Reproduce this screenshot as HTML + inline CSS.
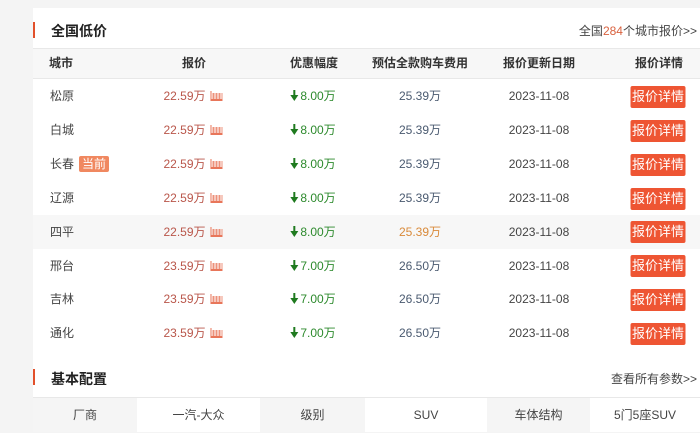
<!DOCTYPE html>
<html><head><meta charset="utf-8"><style>
*{margin:0;padding:0;box-sizing:border-box}
body{width:700px;height:432px;overflow:hidden;background:#f4f4f4;font-family:"Liberation Sans","Noto Sans CJK SC",sans-serif;font-size:12px;color:#444;position:relative}
.panel{position:absolute;left:33px;top:8px;right:0;bottom:0;background:#fff}
.t{position:absolute;font-size:14px;font-weight:bold;color:#222}
.bar{position:absolute;left:0;width:2px;height:16px;background:#e2502b}
.row{position:absolute;left:0;right:0;height:34px}
.c{position:absolute;top:0;line-height:34px;text-align:center;transform:translateX(-50%);white-space:nowrap}
.hd{background:#f7f7f7;border-top:1px solid #e8e8e8;border-bottom:1px solid #e8e8e8;font-weight:bold;color:#333}
.pr{color:#b9564a}
.ic{display:inline-block;width:12px;height:10px;border-bottom:2px solid #e8765a;border-left:1px solid #e8765a;vertical-align:-1px;margin-left:5px;position:relative}
.ic:after{content:"";position:absolute;left:1px;right:0;bottom:0;height:6px;background:repeating-linear-gradient(90deg,#e8765a 0 2px,transparent 2px 3px);opacity:.8}
.dc{color:#2d8a2d}
.ar{display:inline-block;position:relative;width:8px;height:11px;vertical-align:-1px;margin-right:2px}
.ar:before{content:"";position:absolute;left:3px;top:0;width:2px;height:6px;background:#1f7a1f}
.ar:after{content:"";position:absolute;left:0;top:5px;border-left:4px solid transparent;border-right:4px solid transparent;border-top:6px solid #1f7a1f}
.btn{display:inline-block;background:#ee5533;color:#fff;border-radius:2px;width:55px;height:22px;line-height:22px;font-size:13px;text-align:center;vertical-align:middle}
.tag{display:inline-block;background:#f08860;color:#fff;padding:0 3px;line-height:16px;margin-left:5px;border-radius:2px}
.cfg{position:absolute;top:397px;height:35px;line-height:35px;text-align:center;border-top:1px solid #e8e8e8;color:#444}
</style></head><body>
<div class="panel">
<div class="bar" style="top:14px"></div>
<div class="t" style="left:18px;top:13px">全国低价</div>
<div style="position:absolute;right:3px;top:14px;color:#444">全国<span style="color:#d9623f">284</span>个城市报价&gt;&gt;</div>
<div class="row hd" style="top:40px;height:31px">
<div class="c" style="left:28px;line-height:29px">城市</div>
<div class="c" style="left:161px;line-height:29px">报价</div>
<div class="c" style="left:281px;line-height:29px">优惠幅度</div>
<div class="c" style="left:387px;line-height:29px">预估全款购车费用</div>
<div class="c" style="left:506px;line-height:29px">报价更新日期</div>
<div class="c" style="left:626px;line-height:29px">报价详情</div>
</div>
</div>
<div id="rows" style="position:absolute;left:33px;top:0;right:0"></div>
<div style="position:absolute;left:33px;top:369px;width:2px;height:16px;background:#e2502b"></div>
<div class="t" style="left:51px;top:369px">基本配置</div>
<div style="position:absolute;right:3px;top:370px;color:#444">查看所有参数&gt;&gt;</div>
<div class="cfg" style="left:33px;width:104px;background:#f5f5f5">厂商</div>
<div class="cfg" style="left:137px;width:123px">一汽-大众</div>
<div class="cfg" style="left:260px;width:105px;background:#f5f5f5">级别</div>
<div class="cfg" style="left:365px;width:122px">SUV</div>
<div class="cfg" style="left:487px;width:103px;background:#f5f5f5">车体结构</div>
<div class="cfg" style="left:590px;width:110px">5门5座SUV</div>
<script>
var d=[["松原","22.59","8.00","25.39"],["白城","22.59","8.00","25.39"],["长春","22.59","8.00","25.39"],["辽源","22.59","8.00","25.39"],["四平","22.59","8.00","25.39"],["邢台","23.59","7.00","26.50"],["吉林","23.59","7.00","26.50"],["通化","23.59","7.00","26.50"]];
var h="";d.forEach(function(r,i){var top=79+i*33.9;var hl=i==4;
h+='<div class="row" style="top:'+top+'px;'+(hl?'background:#f7f7f7':'')+'">'+
'<div class="c" style="left:17px;transform:none;text-align:left">'+r[0]+(i==2?'<span class="tag">当前</span>':'')+'</div>'+
'<div class="c pr" style="left:160px">'+r[1]+'万<span class="ic"></span></div>'+
'<div class="c dc" style="left:280px"><span class="ar"></span>'+r[2]+'万</div>'+
'<div class="c" style="left:387px;color:'+(hl?'#d98a3a':'#4a5a70')+'">'+r[3]+'万</div>'+
'<div class="c" style="left:506px">2023-11-08</div>'+
'<div class="c" style="left:625px"><span class="btn">报价详情</span></div></div>';});
document.getElementById("rows").innerHTML=h;
</script>
</body></html>
